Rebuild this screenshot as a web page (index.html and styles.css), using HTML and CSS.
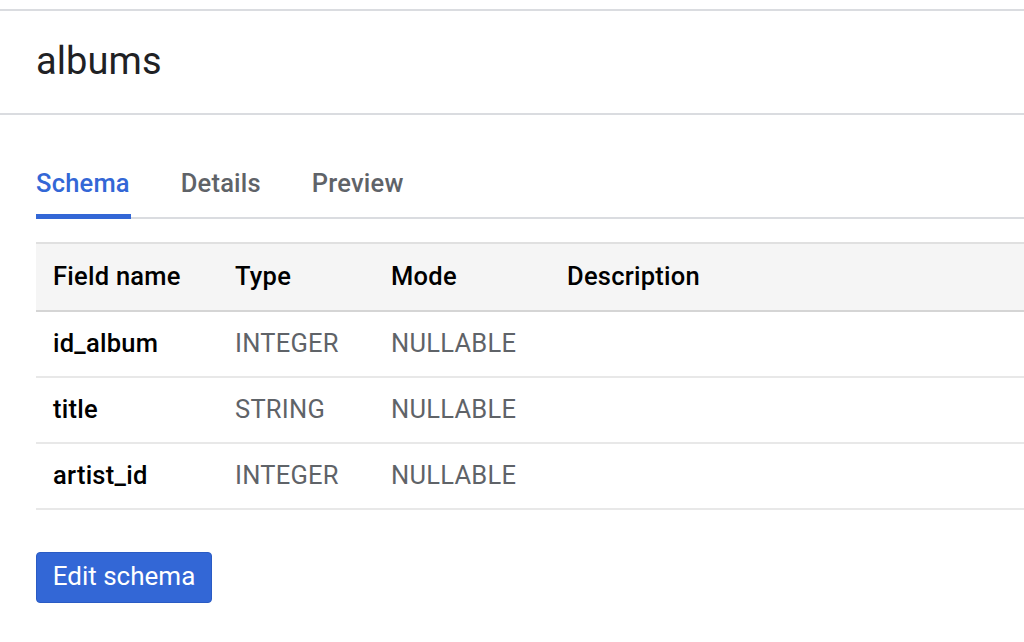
FILE: index.html
```html
<!DOCTYPE html>
<html>
<head>
<meta charset="utf-8">
<link rel="stylesheet" href="styles.css">
</head>
<body>
<div class="page">
  <header class="title-bar">
    <h1 class="title">albums</h1>
  </header>
  <main class="content">
    <nav class="tabs">
      <div class="tab active">Schema</div>
      <div class="tab">Details</div>
      <div class="tab">Preview</div>
    </nav>
    <table class="schema">
      <thead>
        <tr><th class="c1">Field name</th><th class="c2">Type</th><th class="c3">Mode</th><th class="c4">Description</th></tr>
      </thead>
      <tbody>
        <tr><td class="name">id_album</td><td>INTEGER</td><td>NULLABLE</td><td></td></tr>
        <tr><td class="name">title</td><td>STRING</td><td>NULLABLE</td><td></td></tr>
        <tr><td class="name">artist_id</td><td>INTEGER</td><td>NULLABLE</td><td></td></tr>
      </tbody>
    </table>
    <button class="btn">Edit schema</button>
  </main>
</div>
</body>
</html>
```
FILE: styles.css
```css
* { box-sizing: border-box; }
html, body { margin: 0; padding: 0; background: #fff; }
body { font-family: Roboto, "Noto Sans", sans-serif; color: #202124; }
.page { width: 1024px; height: 642px; overflow: hidden; padding-top: 9px; }
.title-bar {
  border-top: 2px solid #dadce0;
  border-bottom: 2px solid #dadce0;
  height: 106px;
  display: flex;
  align-items: center;
  padding-left: 36px;
}
.title { margin: 0; font-size: 38px; font-weight: 400; color: #202124; line-height: 1; padding-bottom: 2px; letter-spacing: 0.1px; }
.content { padding-left: 36px; }
.tabs {
  display: flex;
  margin-top: 45px;
  border-bottom: 2px solid #dadce0;
  height: 59px;
}
.tab {
  font-size: 25.5px;
  font-weight: 500;
  letter-spacing: 0.2px;
  color: #5f6368;
  padding: 8px 0 0;
  margin-right: 51px;
  position: relative;
}
.tab.active { color: #3367d6; }
.tab.active::after {
  content: "";
  position: absolute;
  left: 0; right: -1px; bottom: -2px;
  height: 5px;
  background: #3367d6;
}
.schema {
  margin-top: 23px;
  width: 100%;
  border-collapse: collapse;
  font-size: 25.5px;
  letter-spacing: 0.25px;
}
.schema th {
  text-align: left;
  font-weight: 500;
  color: #000;
  height: 68px;
  background: #f5f5f5;
  border-top: 2px solid #e0e0e0;
  border-bottom: 2px solid #d5d5d5;
  padding: 0 0 2px;
}
.schema td {
  height: 66px;
  padding: 0 0 3px;
  color: #5f6368;
  border-bottom: 2px solid #e8e8e8;
}
.schema td.name { color: #000; font-weight: 500; }
.schema .c1 { width: 199px; }
.schema .c2 { width: 156px; }
.schema .c3 { width: 176px; }
.schema th:first-child, .schema td:first-child { padding-left: 17px; }
.btn {
  margin-top: 42px;
  background: #3367d6;
  color: #fff;
  border: 1px solid #2a5bc4;
  border-radius: 4px;
  width: 176px;
  height: 51px;
  font-family: Roboto, sans-serif;
  font-size: 26px;
  font-weight: 400;
  letter-spacing: 0;
  padding: 0 0 3px;
}
```
